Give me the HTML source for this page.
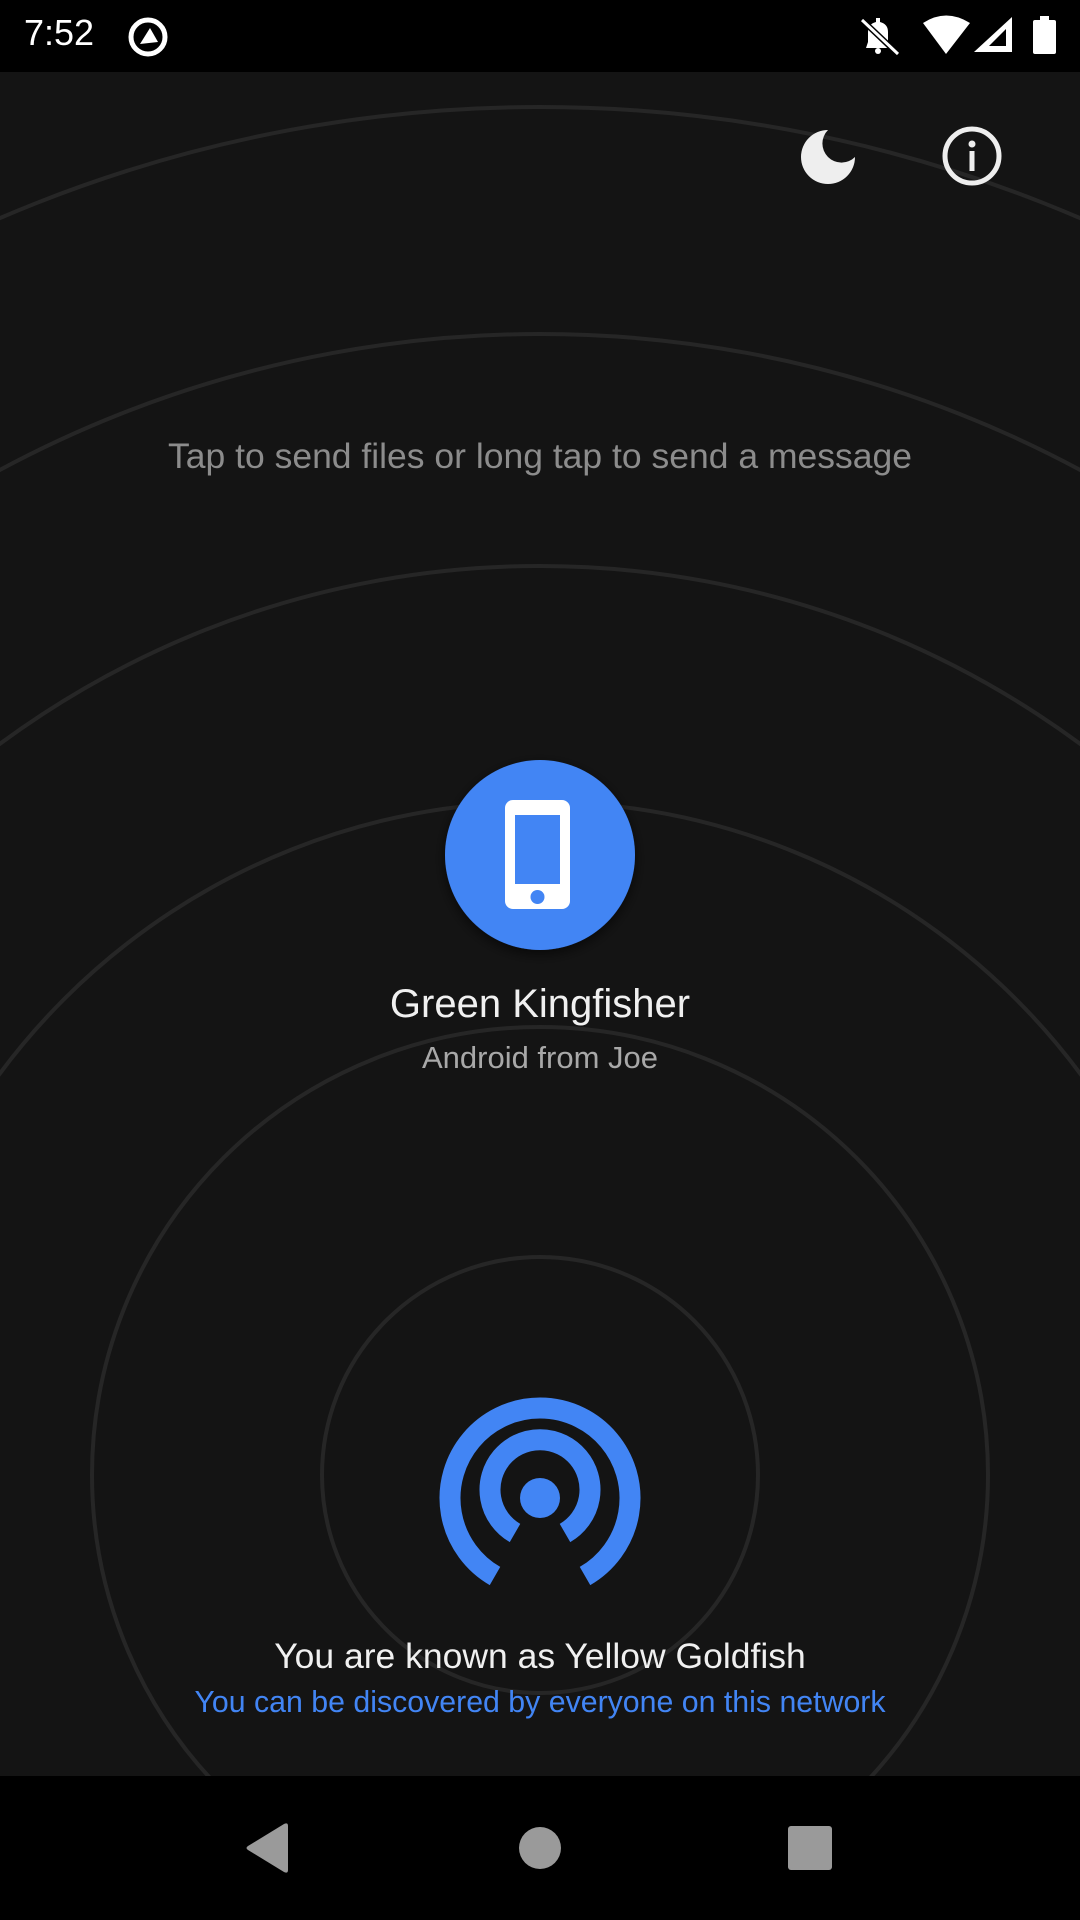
<!DOCTYPE html>
<html><head><meta charset="utf-8"><style>
html,body{margin:0;padding:0;overflow:hidden;}
body{width:1080px;height:1920px;background:#141414;position:relative;overflow:hidden;font-family:"Liberation Sans",sans-serif;}
.t{position:absolute;left:0;width:1080px;text-align:center;white-space:nowrap;}
</style></head><body>
<svg width="1080" height="1920" style="position:absolute;left:0;top:0;display:block" xmlns="http://www.w3.org/2000/svg">
<g fill="none" stroke="#262626" stroke-width="4">
<circle cx="540" cy="1475" r="218"/>
<circle cx="540" cy="1475" r="448"/>
<circle cx="540" cy="1475" r="673"/>
<circle cx="540" cy="1475" r="909"/>
<circle cx="540" cy="1475" r="1141"/>
<circle cx="540" cy="1475" r="1368"/>
</g>
<rect x="0" y="0" width="1080" height="72" fill="#000"/>
<rect x="0" y="1776" width="1080" height="144" fill="#000"/>
<g fill="#fff">
<circle cx="148" cy="37" r="17" fill="none" stroke="#fff" stroke-width="5"/>
<path d="M140 44 L150 28 L158 42 Z" fill="#fff"/>
<path d="M866 48 L892 48 L888 42 L888 32 Q888 24 880 22 L880 18 L876 18 L876 22 Q868 24 868 32 L868 42 Z"/>
<circle cx="878" cy="51" r="3"/>
<path d="M862 20 L898 54" stroke="#000" stroke-width="6"/>
<path d="M862 20 L898 54" stroke="#fff" stroke-width="3"/>
<path d="M923 23 Q946 8 970 23 L946 54 Z"/>
<path d="M1012 17 L1012 52 L974 52 Z"/>
<path d="M1006 29 L1006 46 L989 46 Z" fill="#000"/>
<rect x="1033" y="20" width="23" height="34" rx="2"/>
<rect x="1040" y="16" width="9" height="5"/>
</g>
<path d="M828 130 A27 27 0 1 0 855 157 A18 18 0 1 1 828 130 Z" fill="#eee"/>
<circle cx="972" cy="156" r="27" fill="none" stroke="#eee" stroke-width="5"/>
<circle cx="972" cy="144" r="3.5" fill="#eee"/>
<rect x="969.5" y="151" width="5" height="20" fill="#eee"/>
<defs><filter id="sh" x="-30%" y="-30%" width="160%" height="160%"><feDropShadow dx="0" dy="4" stdDeviation="6" flood-color="#000" flood-opacity="0.6"/></filter></defs>
<circle cx="540" cy="855" r="95" fill="#4285f4" filter="url(#sh)"/>
<rect x="505" y="800" width="65" height="109" rx="8" fill="#fff"/>
<rect x="515" y="815" width="45" height="69" fill="#4285f4"/>
<circle cx="537.5" cy="897" r="7" fill="#4285f4"/>
<g fill="none" stroke="#4285f4">
<path d="M495 1576 A90 90 0 1 1 585 1576" stroke-width="21"/>
<path d="M515 1533 A50 50 0 1 1 565 1533" stroke-width="21"/>
</g>
<circle cx="540" cy="1498" r="20" fill="#4285f4"/>
<g fill="#9a9a9a">
<path d="M288 1826 L288 1870 Q288 1874 284 1872 L248 1850 Q245 1848 248 1846 L284 1824 Q288 1822 288 1826 Z"/>
<circle cx="540" cy="1848" r="21"/>
<rect x="788" y="1826" width="44" height="44" rx="3"/>
</g>
</svg>
<div class="t" style="top:12px;left:24px;width:auto;color:#fff;font-size:36px;">7:52</div>
<div class="t" style="top:436px;color:#8c8c8c;font-size:35.5px;">Tap to send files or long tap to send a message</div>
<div class="t" style="top:982px;color:#f0f0f0;font-size:40px;">Green Kingfisher</div>
<div class="t" style="top:1040px;color:#a8a8a8;font-size:31px;">Android from Joe</div>
<div class="t" style="top:1636px;color:#f0f0f0;font-size:35.5px;">You are known as Yellow Goldfish</div>
<div class="t" style="top:1686px;color:#4285f4;font-size:30.3px;">You can be discovered by everyone on this network</div>
</body></html>
